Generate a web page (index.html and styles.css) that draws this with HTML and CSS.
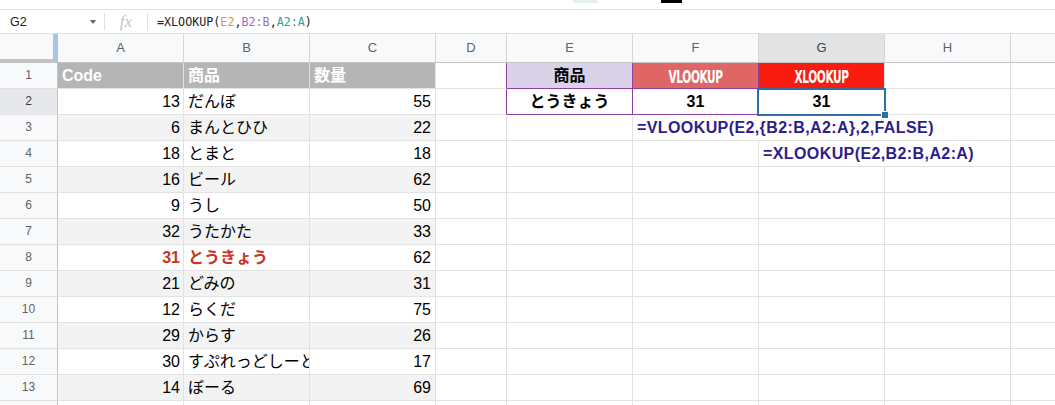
FILE: index.html
```html
<!DOCTYPE html>
<html lang="ja">
<head>
<meta charset="utf-8">
<title>XLOOKUP</title>
<link rel="stylesheet" href="styles.css">
</head>
<body>
<div class="topstrip">
  <span class="tb-ghost"></span>
  <span class="tb-black"></span>
</div>
<div class="fbar">
  <div class="namebox"><span>G2</span><span class="caret"></span></div>
  <div class="sep"></div>
  <div class="fx">fx</div>
  <div class="sep"></div>
  <div class="formula">=XLOOKUP(<span class="f-e">E2</span>,<span class="f-b">B2:B</span>,<span class="f-a">A2:A</span>)</div>
</div>
<div class="sheet">
  <!-- column headers -->
  <div class="corner"></div>
  <div class="ch">A</div><div class="ch">B</div><div class="ch">C</div><div class="ch">D</div>
  <div class="ch">E</div><div class="ch">F</div><div class="ch sel">G</div><div class="ch">H</div><div class="ch last"></div>

  <!-- row 1 -->
  <div class="rh">1</div>
  <div class="c hdr">Code</div><div class="c hdr">商品</div><div class="c hdr">数量</div>
  <div class="c pu-r"></div>
  <div class="c e1 pu-r pu-b">商品</div>
  <div class="c lk vl pu-r pu-b"><span>VLOOKUP</span></div>
  <div class="c lk xl pu-b"><span>XLOOKUP</span></div>
  <div class="c"></div><div class="c last"></div>

  <!-- row 2 -->
  <div class="rh sel">2</div>
  <div class="c num">13</div><div class="c">だんぼ</div><div class="c num r">55</div>
  <div class="c pu-r"></div>
  <div class="c bc pu-r pu-b">とうきょう</div>
  <div class="c bc pu-r pu-b">31</div>
  <div class="c bc g2">31<span class="selbox"><span class="handle"></span></span></div>
  <div class="c"></div><div class="c last"></div>

  <!-- row 3 -->
  <div class="rh">3</div>
  <div class="c num band">6</div><div class="c band">まんとひひ</div><div class="c num r band">22</div>
  <div class="c"></div><div class="c"></div>
  <div class="c ftext span3">=VLOOKUP(E2,{B2:B,A2:A},2,FALSE)</div>
  <div class="c last"></div>

  <!-- row 4 -->
  <div class="rh">4</div>
  <div class="c num">18</div><div class="c">とまと</div><div class="c num r">18</div>
  <div class="c"></div><div class="c"></div><div class="c"></div>
  <div class="c ftext span2">=XLOOKUP(E2,B2:B,A2:A)</div>
  <div class="c last"></div>

  <!-- row 5 -->
  <div class="rh">5</div>
  <div class="c num band">16</div><div class="c band">ビール</div><div class="c num r band">62</div>
  <div class="c"></div><div class="c"></div><div class="c"></div><div class="c"></div><div class="c"></div><div class="c last"></div>

  <!-- row 6 -->
  <div class="rh">6</div>
  <div class="c num">9</div><div class="c">うし</div><div class="c num r">50</div>
  <div class="c"></div><div class="c"></div><div class="c"></div><div class="c"></div><div class="c"></div><div class="c last"></div>

  <!-- row 7 -->
  <div class="rh">7</div>
  <div class="c num band">32</div><div class="c band">うたかた</div><div class="c num r band">33</div>
  <div class="c"></div><div class="c"></div><div class="c"></div><div class="c"></div><div class="c"></div><div class="c last"></div>

  <!-- row 8 -->
  <div class="rh">8</div>
  <div class="c num red">31</div><div class="c red">とうきょう</div><div class="c num r">62</div>
  <div class="c"></div><div class="c"></div><div class="c"></div><div class="c"></div><div class="c"></div><div class="c last"></div>

  <!-- row 9 -->
  <div class="rh">9</div>
  <div class="c num band">21</div><div class="c band">どみの</div><div class="c num r band">31</div>
  <div class="c"></div><div class="c"></div><div class="c"></div><div class="c"></div><div class="c"></div><div class="c last"></div>

  <!-- row 10 -->
  <div class="rh">10</div>
  <div class="c num">12</div><div class="c">らくだ</div><div class="c num r">75</div>
  <div class="c"></div><div class="c"></div><div class="c"></div><div class="c"></div><div class="c"></div><div class="c last"></div>

  <!-- row 11 -->
  <div class="rh">11</div>
  <div class="c num band">29</div><div class="c band">からす</div><div class="c num r band">26</div>
  <div class="c"></div><div class="c"></div><div class="c"></div><div class="c"></div><div class="c"></div><div class="c last"></div>

  <!-- row 12 -->
  <div class="rh">12</div>
  <div class="c num">30</div><div class="c">すぷれっどしーと</div><div class="c num r">17</div>
  <div class="c"></div><div class="c"></div><div class="c"></div><div class="c"></div><div class="c"></div><div class="c last"></div>

  <!-- row 13 -->
  <div class="rh">13</div>
  <div class="c num band">14</div><div class="c band">ぼーる</div><div class="c num r band">69</div>
  <div class="c"></div><div class="c"></div><div class="c"></div><div class="c"></div><div class="c"></div><div class="c last"></div>

  <!-- row 14 (only its top edge is in view) -->
  <div class="rh"></div>
  <div class="c"></div><div class="c"></div><div class="c"></div>
  <div class="c"></div><div class="c"></div><div class="c"></div><div class="c"></div><div class="c"></div><div class="c last"></div>
</div>
</body>
</html>
```
FILE: styles.css
```css
html, body {
  margin: 0;
  padding: 0;
}
body {
  width: 1055px;
  height: 405px;
  overflow: hidden;
  background: #ffffff;
  font-family: "Liberation Sans", "Noto Sans CJK JP", sans-serif;
  color: #000;
}

/* top toolbar remnant */
.topstrip {
  height: 10px;
  box-sizing: border-box;
  border-bottom: 1px solid #e0e0e0;
  display: flex;
  align-items: flex-start;
}
.tb-ghost {
  margin-left: 573px;
  width: 25px;
  height: 3px;
  background: #e7efec;
}
.tb-black {
  margin-left: 63px;
  width: 21px;
  height: 3px;
  background: #000;
}

/* formula bar */
.fbar {
  height: 24px;
  box-sizing: border-box;
  border-bottom: 1px solid #e0e0e0;
  display: flex;
  align-items: center;
}
.namebox {
  width: 104px;
  box-sizing: border-box;
  padding: 0 8px 0 10px;
  display: flex;
  align-items: center;
  justify-content: space-between;
  font-size: 12.5px;
  color: #202124;
}
.caret {
  width: 0;
  height: 0;
  border-left: 3.5px solid transparent;
  border-right: 3.5px solid transparent;
  border-top: 4px solid #5f6368;
}
.sep {
  width: 1px;
  height: 17px;
  background: #e0e0e0;
}
.fx {
  width: 42px;
  text-align: center;
  font-family: "Liberation Serif", serif;
  font-style: italic;
  font-size: 17px;
  color: #c6c6c6;
  line-height: 22px;
}
.formula {
  padding-left: 9px;
  font-family: "DejaVu Sans Mono", monospace;
  font-size: 11.7px;
  color: #202124;
}
.f-e { color: #e39a3b; }
.f-b { color: #9a6cc4; }
.f-a { color: #2aa394; }

/* sheet grid */
.sheet {
  display: grid;
  grid-template-columns: 58px 126px 126px 126px 71px 126px 126px 126px 126px 1fr;
  grid-template-rows: 29px;
  grid-auto-rows: 26px;
}
.corner {
  box-sizing: border-box;
  background: #f8f9fa;
  border-right: 5px solid #a8c4e8;
  border-bottom: 4px solid #c2c2c2;
}
.ch {
  box-sizing: border-box;
  background: #f8f9fa;
  border-right: 1px solid #d6d6d6;
  border-bottom: 1px solid #c4c4c4;
  text-align: center;
  font-size: 13px;
  line-height: 28px;
  color: #5f6368;
}
.ch.sel {
  background: #e2e3e5;
  color: #3c4043;
}
.rh {
  box-sizing: border-box;
  background: #f8f9fa;
  border-right: 1px solid #c4c4c4;
  border-bottom: 1px solid #e0e0e0;
  text-align: center;
  font-size: 12px;
  line-height: 25px;
  color: #5f6368;
}
.rh.sel {
  background: #e6e8eb;
  color: #3c4043;
}

.c {
  box-sizing: border-box;
  border-right: 1px solid #e2e2e2;
  border-bottom: 1px solid #e2e2e2;
  padding: 0 4px;
  font-size: 16px;
  line-height: 25px;
  white-space: nowrap;
  overflow: hidden;
}
.last { border-right: none; }
.num {
  text-align: right;
  padding-right: 3px;
}
.num.r { padding-right: 4px; }
.hdr {
  background: #b5b5b5;
  color: #ffffff;
  font-weight: bold;
}
.band { background: #f3f3f3; }
.red {
  color: #cc3325;
  font-weight: bold;
}

.e1 {
  background: #d9d2e9;
  font-weight: bold;
  text-align: center;
}
.bc {
  font-weight: bold;
  text-align: center;
}
.lk {
  color: #ffffff;
  text-align: center;
}
.lk span {
  display: inline-block;
  font-family: "DejaVu Sans Condensed", "DejaVu Sans", sans-serif;
  font-stretch: condensed;
  font-weight: bold;
  font-size: 12px;
  line-height: 12px;
  letter-spacing: -0.4px;
  vertical-align: middle;
  transform: scale(0.98, 1.5);
}
.vl { background: #e06666; }
.xl { background: #fa1c10; }

.pu-r { border-right-color: #8f3f9f; }
.pu-b { border-bottom-color: #8f3f9f; }

.g2 {
  position: relative;
  overflow: visible;
}
.selbox {
  position: absolute;
  left: -2px;
  top: -1px;
  right: -2px;
  bottom: -2px;
  border: 2px solid #2f6ea6;
}
.handle {
  position: absolute;
  right: -5px;
  bottom: -5px;
  width: 6px;
  height: 6px;
  background: #2f6ea6;
  border: 1px solid #ffffff;
}

.ftext {
  color: #2e1e8c;
  font-weight: bold;
  letter-spacing: 0.4px;
}
.span3 { grid-column: span 3; }
.span2 { grid-column: span 2; }
```
